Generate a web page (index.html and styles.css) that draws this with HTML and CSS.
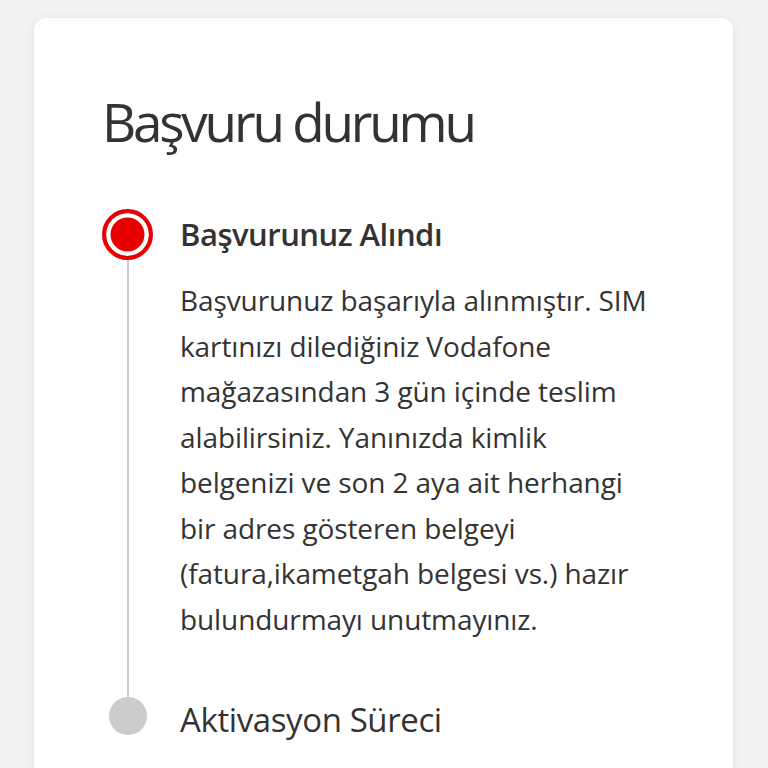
FILE: index.html
```html
<!DOCTYPE html>
<html lang="tr">
<head>
<meta charset="utf-8">
<title>Başvuru durumu</title>
<link rel="stylesheet" href="styles.css">
</head>
<body>
<main class="page">
  <section class="card">
    <h1 class="title">Başvuru durumu</h1>
    <ol class="steps">
      <li class="step step-active">
        <div class="marker">
          <span class="dot dot-active"></span>
          <span class="rail"></span>
        </div>
        <div class="content">
          <h2 class="step-title">Başvurunuz Alındı</h2>
          <p class="step-text">Başvurunuz başarıyla alınmıştır. SIM<br>kartınızı dilediğiniz Vodafone<br>mağazasından 3 gün içinde teslim<br>alabilirsiniz. Yanınızda kimlik<br>belgenizi ve son 2 aya ait herhangi<br>bir adres gösteren belgeyi<br>(fatura,ikametgah belgesi vs.) hazır<br>bulundurmayı unutmayınız.</p>
        </div>
      </li>
      <li class="step step-pending">
        <div class="marker">
          <span class="dot dot-pending"></span>
        </div>
        <div class="content">
          <h2 class="step-title step-title-pending">Aktivasyon Süreci</h2>
        </div>
      </li>
    </ol>
  </section>
</main>
</body>
</html>
```
FILE: styles.css
```css
* { box-sizing: border-box; }
html, body { margin: 0; padding: 0; }
body {
  background: #f2f2f2;
  font-family: "Open Sans", "Noto Sans", sans-serif;
  color: #333333;
  height: 768px;
  overflow: hidden;
}
.page {
  padding: 18px 35px 0 34px;
}
.card {
  background: #ffffff;
  border-radius: 12px;
  box-shadow: 0 1px 8px rgba(0, 0, 0, 0.07);
  padding: 71px 30px 60px 68px;
  min-height: 800px;
}
.title {
  margin: 0;
  font-size: 53px;
  line-height: 66px;
  font-weight: 400;
  font-stretch: 90%;
  letter-spacing: -3.2px;
  color: #333333;
}
.steps {
  list-style: none;
  margin: 54px 0 0 0;
  padding: 0;
}
.step {
  display: grid;
  grid-template-columns: 51px 1fr;
  column-gap: 27px;
}
.marker {
  display: flex;
  flex-direction: column;
  align-items: center;
}
.dot {
  display: block;
  border-radius: 50%;
  flex: none;
}
.dot-active {
  width: 51px;
  height: 51px;
  background: #e60000;
  border: 4px solid #e60000;
  box-shadow: inset 0 0 0 4.5px #ffffff;
}
.dot-pending {
  width: 38px;
  height: 38px;
  background: #cccccc;
}
.rail {
  display: block;
  width: 2px;
  flex: 1;
  background: #cccccc;
}
.step-active .content {
  padding-bottom: 55px;
}
.step-title {
  margin: 0;
  font-size: 31px;
  line-height: 51px;
  font-weight: 600;
  letter-spacing: -0.5px;
}
.step-title-pending {
  font-size: 33px;
  font-weight: 400;
  line-height: 38px;
  letter-spacing: -0.4px;
  margin-top: 4px;
}
.step-text {
  margin: 18px 0 0 0;
  font-size: 28px;
  line-height: 45.5px;
  letter-spacing: -0.1px;
}
```
